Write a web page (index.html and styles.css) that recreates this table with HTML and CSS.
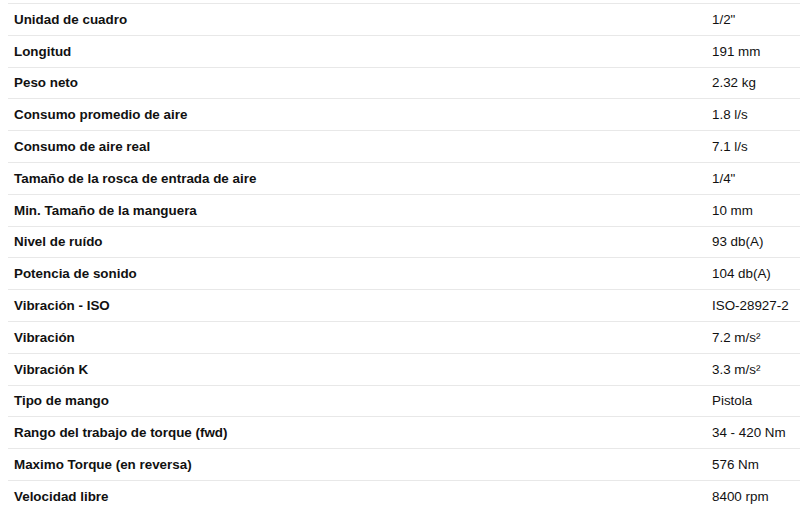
FILE: index.html
```html
<!DOCTYPE html>
<html lang="es">
<head>
<meta charset="utf-8">
<link rel="stylesheet" href="styles.css">
</head>
<body>
<div class="specs">
  <div class="row"><div class="k">Unidad de cuadro</div><div class="v">1/2"</div></div>
  <div class="row"><div class="k">Longitud</div><div class="v">191 mm</div></div>
  <div class="row"><div class="k">Peso neto</div><div class="v">2.32 kg</div></div>
  <div class="row"><div class="k">Consumo promedio de aire</div><div class="v">1.8 l/s</div></div>
  <div class="row"><div class="k">Consumo de aire real</div><div class="v">7.1 l/s</div></div>
  <div class="row"><div class="k">Tamaño de la rosca de entrada de aire</div><div class="v">1/4"</div></div>
  <div class="row"><div class="k">Min. Tamaño de la manguera</div><div class="v">10 mm</div></div>
  <div class="row"><div class="k">Nivel de ruído</div><div class="v">93 db(A)</div></div>
  <div class="row"><div class="k">Potencia de sonido</div><div class="v">104 db(A)</div></div>
  <div class="row"><div class="k">Vibración - ISO</div><div class="v">ISO-28927-2</div></div>
  <div class="row"><div class="k">Vibración</div><div class="v">7.2 m/s²</div></div>
  <div class="row"><div class="k">Vibración K</div><div class="v">3.3 m/s²</div></div>
  <div class="row"><div class="k">Tipo de mango</div><div class="v">Pistola</div></div>
  <div class="row"><div class="k">Rango del trabajo de torque (fwd)</div><div class="v">34 - 420 Nm</div></div>
  <div class="row"><div class="k">Maximo Torque (en reversa)</div><div class="v">576 Nm</div></div>
  <div class="row"><div class="k">Velocidad libre</div><div class="v">8400 rpm</div></div>
</div>
</body>
</html>
```
FILE: styles.css
```css
html, body {
  margin: 0;
  padding: 0;
  background: #fff;
  overflow: hidden;
}
body {
  font-family: "Liberation Sans", Arial, sans-serif;
  font-size: 13.4px;
  color: #111;
}
.specs {
  margin: 3px 0 0 8px;
}
.row {
  display: grid;
  grid-template-columns: 698px 1fr;
  align-items: center;
  height: 31.8px;
  box-sizing: border-box;
  border-top: 1px solid #e8e8e8;
  padding-left: 6px;
}
.k {
  font-weight: bold;
}
.v {
  white-space: nowrap;
}
```
